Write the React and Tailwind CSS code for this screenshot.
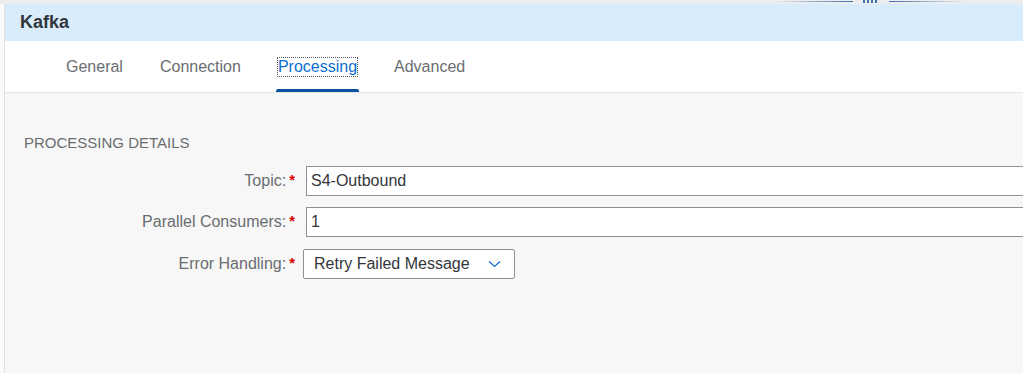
import React from "react";

const tabs = ["General", "Connection", "Processing", "Advanced"];

const Label = ({ text }) => (
  <div className="w-[290px] flex justify-end items-center text-[16px] text-[#6a6d70]">
    <span>{text}</span>
    <span className="ml-[3px] text-[#d80000] text-[15px] font-bold leading-none -mt-[3px]">*</span>
  </div>
);

const Splitter = () => (
  <div className="flex items-start h-[4px] pl-[775px]">
    <div className="mt-[1px] h-[1px] w-[78px] bg-gradient-to-r from-transparent to-[#3f6ea8]" />
    <div className="ml-[10px] flex gap-[2px]">
      <div className="w-[2px] h-[3px] bg-[#3f6ea8]" />
      <div className="w-[2px] h-[3px] bg-[#3f6ea8]" />
      <div className="w-[2px] h-[3px] bg-[#3f6ea8]" />
      <div className="w-[2px] h-[3px] bg-[#3f6ea8]" />
    </div>
    <div className="ml-[12px] mt-[1px] h-[1px] w-[74px] bg-gradient-to-r from-[#3f6ea8] to-transparent" />
  </div>
);

export default function App() {
  return (
    <div
      className="w-[1023px] h-[373px] overflow-hidden flex flex-col bg-[#ebedef]"
      style={{ fontFamily: '"Liberation Sans", Arial, sans-serif' }}
    >
      <Splitter />
      <div className="flex flex-1 min-h-0">
        <div className="w-[5px] bg-[#fafafa] border-r border-[#e2e2e2]" />
        <div className="flex-1 flex flex-col min-w-0">
          <div className="h-[37px] bg-[#d9ecfc] flex items-center pl-[15px]">
            <h1 className="text-[18px] font-bold text-[#32363a]">Kafka</h1>
          </div>
          <div className="h-[52px] bg-white border-b border-[#e5e5e5] flex items-stretch pl-[59px] gap-[33px]">
            {tabs.map((t) => {
              const active = t === "Processing";
              return (
                <div key={t} className="relative flex items-center px-[2px]">
                  <span
                    className={`text-[16px] leading-[18px] ${
                      active
                        ? "text-[#0a6ed1] outline-1 outline-dotted outline-[#555]"
                        : "text-[#6a6d70]"
                    }`}
                  >
                    {t}
                  </span>
                  {active && (
                    <div className="absolute left-0 right-0 bottom-0 h-[3px] rounded-t-[2px] bg-[#0854a0]" />
                  )}
                </div>
              );
            })}
          </div>
          <div className="flex-1 bg-[#f7f7f7] pt-[41px]">
            <h2 className="pl-[19px] text-[15px] text-[#6a6d70] leading-[18px]">
              PROCESSING DETAILS
            </h2>
            <div className="mt-[14px] flex flex-col gap-[11px]">
              <div className="flex items-center h-[30px]">
                <Label text="Topic:" />
                <div className="ml-[11px] flex-1 -mr-4 h-[30px] bg-white border border-[#89919a] flex items-center pl-[4px] text-[16px] text-[#32363a]">
                  S4-Outbound
                </div>
              </div>
              <div className="flex items-center h-[30px]">
                <Label text="Parallel Consumers:" />
                <div className="ml-[11px] flex-1 -mr-4 h-[30px] bg-white border border-[#89919a] flex items-center pl-[4px] text-[16px] text-[#32363a]">
                  1
                </div>
              </div>
              <div className="flex items-center h-[30px] mt-[1px]">
                <Label text="Error Handling:" />
                <div className="ml-[8px] w-[212px] h-[30px] bg-white border border-[#89919a] rounded-[2px] flex items-center justify-between pl-[10px] pr-[13px] text-[16px] text-[#32363a]">
                  <span>Retry Failed Message</span>
                  <svg width="13" height="8" viewBox="0 0 13 8" fill="none">
                    <path d="M1 1.5 L6.5 6.5 L12 1.5" stroke="#0a6ed1" strokeWidth="1.2" />
                  </svg>
                </div>
              </div>
            </div>
          </div>
        </div>
      </div>
    </div>
  );
}
